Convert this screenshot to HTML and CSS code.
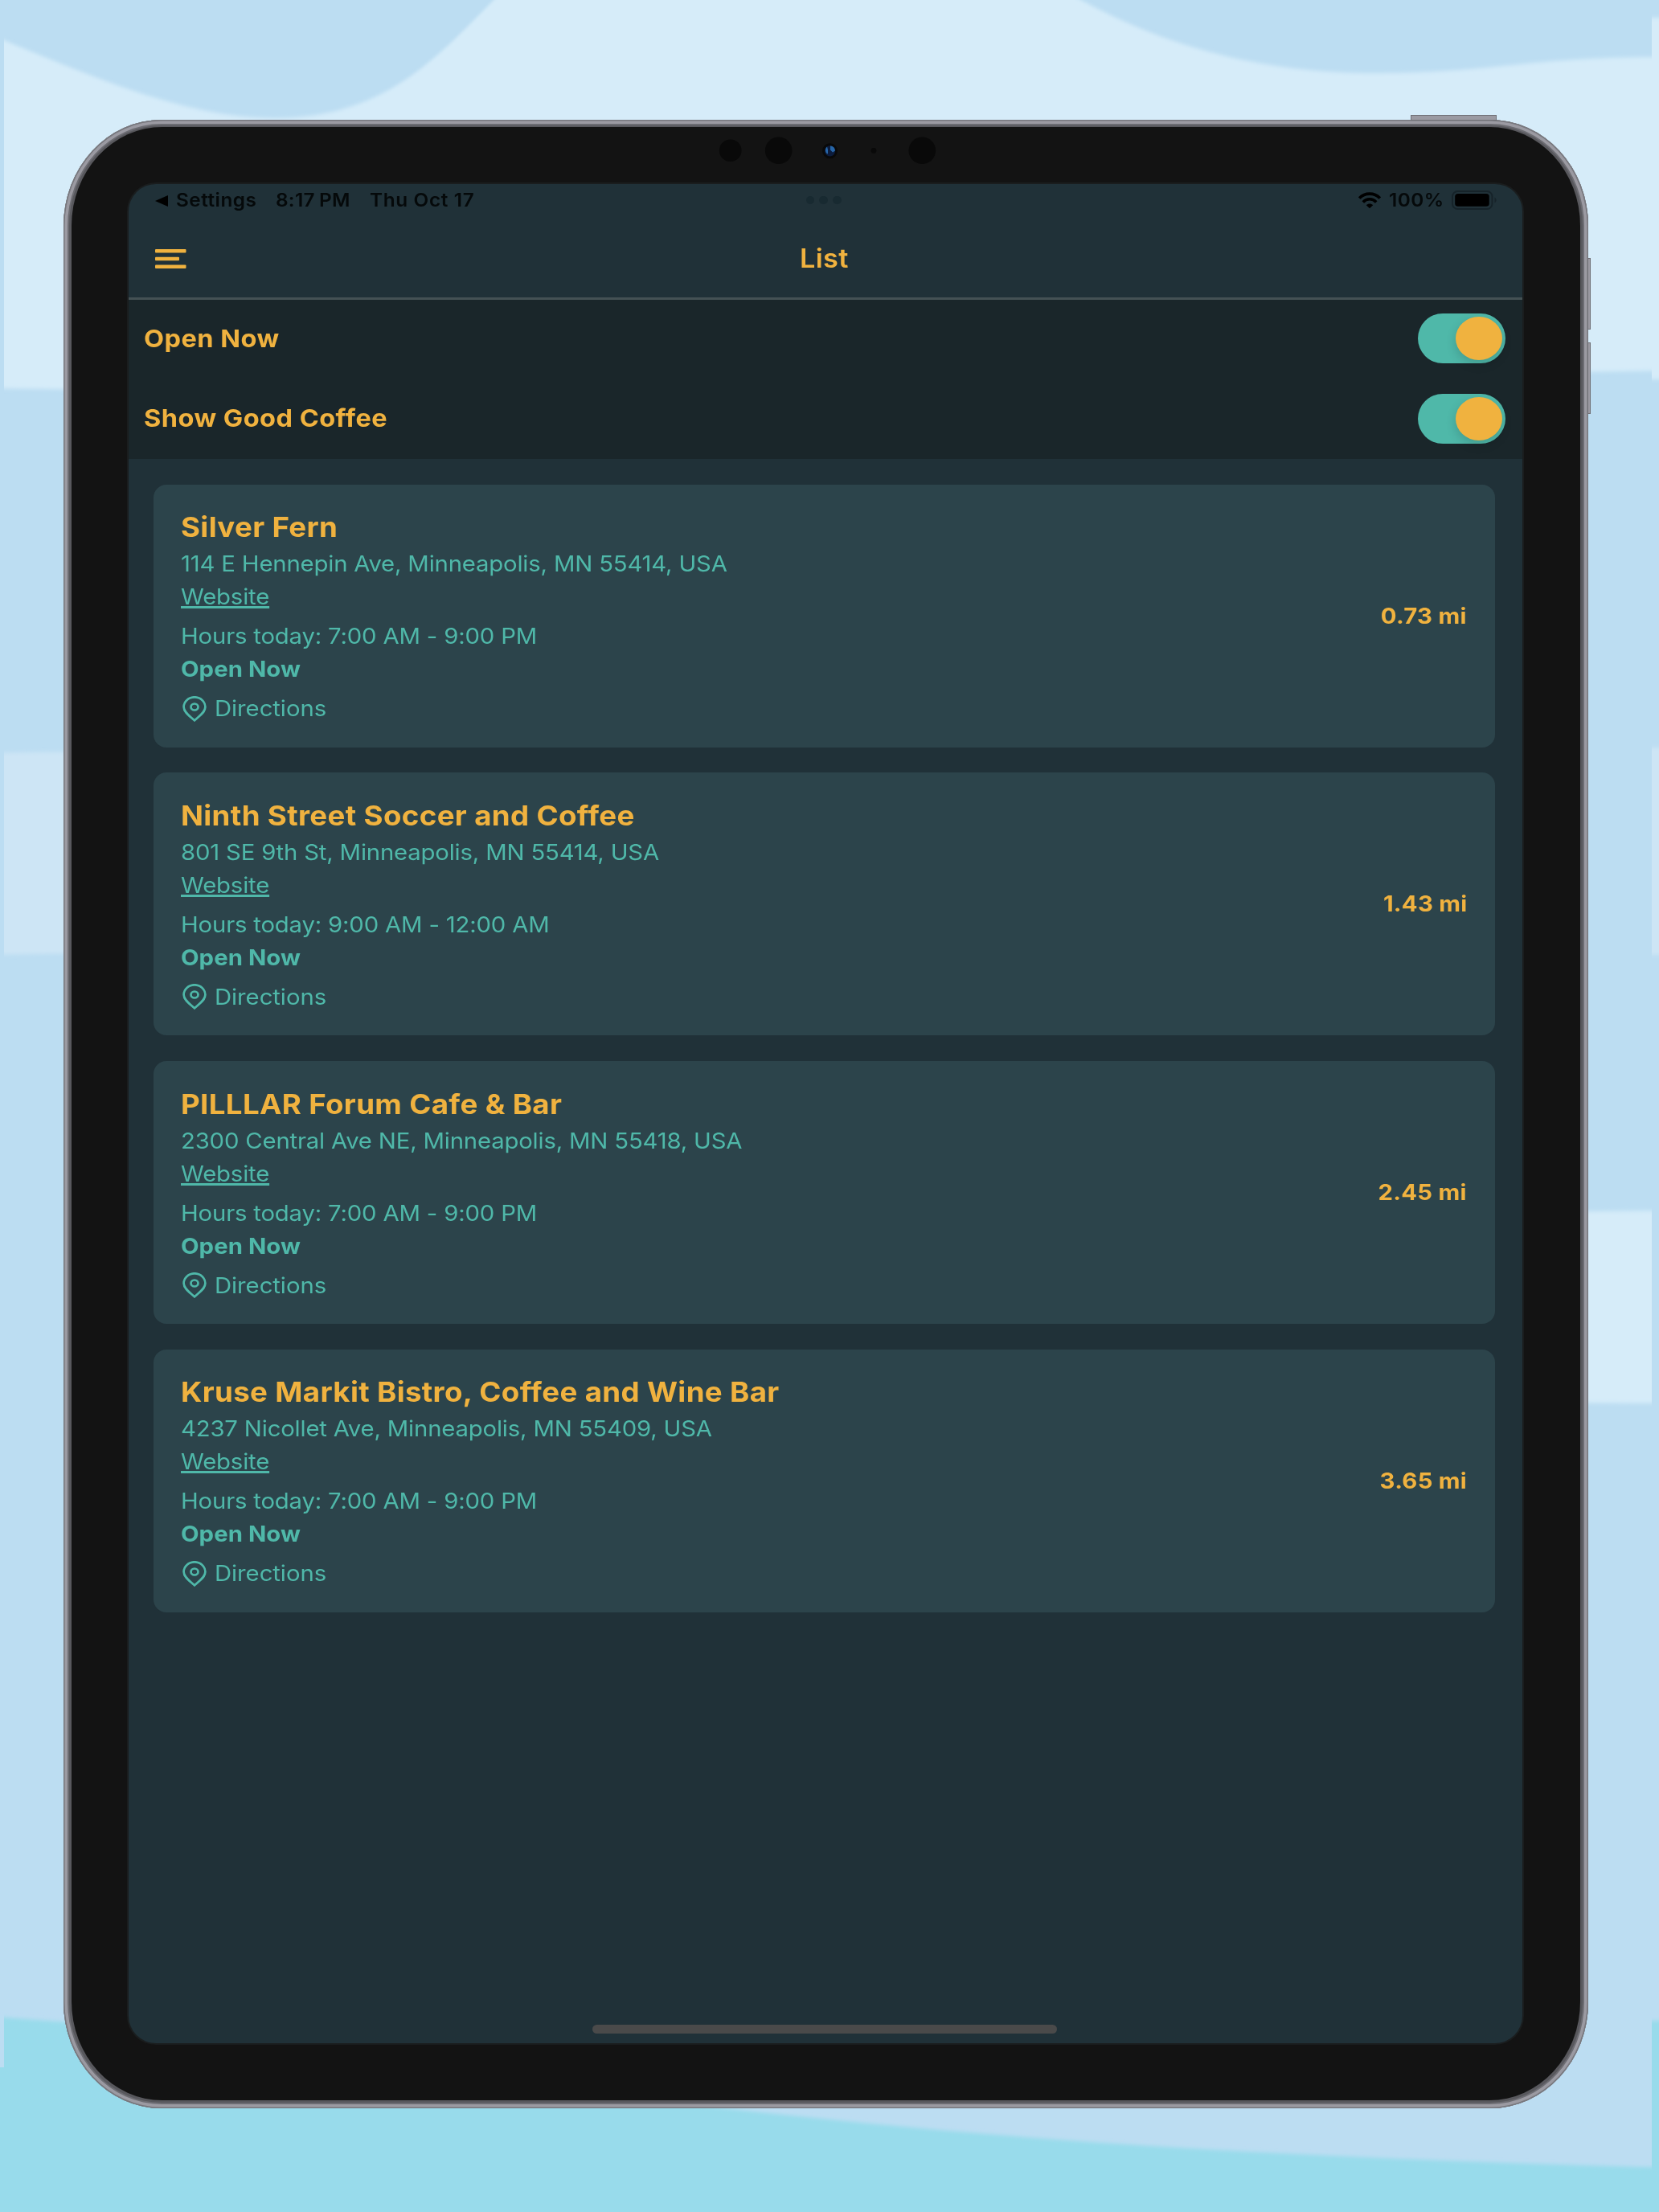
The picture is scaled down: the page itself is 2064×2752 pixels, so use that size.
FILE: index.html
```html
<!DOCTYPE html>
<html lang="en">
<head>
<meta charset="utf-8">
<title>List</title>
<link rel="stylesheet" href="styles.css">
</head>
<body>
<svg class="backdrop" viewBox="0 0 2064 2752" aria-hidden="true">
  <defs><filter id="soft" x="-5%" y="-5%" width="110%" height="110%"><feGaussianBlur stdDeviation="0 2.5"/></filter>
  <clipPath id="tile"><rect x="5" y="0" width="2050" height="2752"/></clipPath>
  <clipPath id="tile-next"><rect x="2055" y="0" width="9" height="2752"/></clipPath></defs>
  <rect width="2064" height="2752" fill="#bcddf2"/>
  <rect y="2572" width="5" height="180" fill="#98dbeb"/>
  <g clip-path="url(#tile)"><g filter="url(#soft)">
    <path fill="#d6ecf9" d="M-20 36 L5 50 C132 103 240 147 342 147 C480 147 545 70 619 -5 L1336 -5 C1420 42 1540 91 1711 91 C1860 91 1900 70 2080 71 L2080 461 L1500 470 L500 490 L-20 483Z"/>
    <path fill="#cde5f5" d="M-20 937 L100 935 V1186 L-20 1188Z"/>
    <path fill="#d6ecf9" d="M1900 1508 L2080 1506 V1746 L1900 1745Z"/>
    <path fill="#98dbeb" d="M-20 2508 L85 2516 C350 2550 600 2600 886 2621 C1180 2655 1500 2682 2080 2697 V2800 H-20Z"/>
  </g></g>
  <g clip-path="url(#tile-next)"><g filter="url(#soft)">
    <rect x="2050" y="22" width="30" height="450" fill="#d6ecf9"/>
    <rect x="2050" y="930" width="30" height="258" fill="#cde5f5"/>
    <rect x="2050" y="2514" width="30" height="260" fill="#98dbeb"/>
  </g></g>
</svg>

<div class="tablet">
  <i class="key key-power"></i><i class="key key-up"></i><i class="key key-down"></i>
  <div class="bezel">
    <svg class="sensors" viewBox="880 158 300 60" aria-hidden="true">
      <g fill="#090909"><circle cx="908.7" cy="187.3" r="13.8"/><circle cx="968.7" cy="187.3" r="16.8"/><circle cx="1032.5" cy="187.8" r="9.5"/><circle cx="1087" cy="187.3" r="3.4"/><circle cx="1147.3" cy="187.3" r="16.8"/></g>
      <circle cx="1032.6" cy="187.8" r="6.6" fill="#0c1c3c"/>
      <path d="M1033 181.4a6.6 6.6 0 0 1 6 6l-3 2-3-3zM1029 182.5l1 4 0 5-2-1a6.600 6.600 0 0 1 1-8z" fill="#2766a8"/>
    </svg>
    <main class="screen">
      <div class="status">
        <span class="back"></span>
        <span class="txt st-settings">Settings</span>
        <span class="txt st-time">8:17<span class="thin"></span>PM</span>
        <span class="txt st-date">Thu Oct 17</span>
        <span class="dots"><i></i><i></i><i></i></span>
        <svg class="wifi" viewBox="0 0 28 20" aria-hidden="true"><g fill="none" stroke="#000" stroke-width="3.6"><path d="M1.200 7.600C8 .3 20 .3 26.800 7.600"/><path d="M5.800 12.400C10.500 7.600 17.500 7.600 22.200 12.400"/></g><path d="M9.800 16.200C12 13.800 16 13.800 18.200 16.200L14 20.200Z"/></svg>
        <span class="txt st-pct">100%</span>
        <svg class="battery" viewBox="0 0 57 24" aria-hidden="true"><rect x="1" y="1" width="49.500" height="22" rx="6.500" fill="none" stroke="#162329" stroke-width="2"/><rect x="4.200" y="4" width="42.500" height="15.800" rx="3.600"/><path d="M53.500 8.500c2.800 1.500 2.800 5.500 0 7z" fill="#162329"/></svg>
      </div>
      <header class="nav">
        <svg class="menu" viewBox="0 0 39 25" aria-hidden="true"><g fill="#f0b23f"><rect x="0" y="0" width="38.500" height="4.600" rx="1"/><rect x="0" y="9.700" width="30" height="4.600" rx="1"/><rect x="0" y="19.500" width="38.500" height="4.600" rx="1"/></g></svg>
        <h1 class="txt nav-title">List</h1>
      </header>
      <section class="filters">
        <div class="filter"><span class="txt label">Open Now</span><span class="switch"><i></i></span></div>
        <div class="filter"><span class="txt label">Show Good Coffee</span><span class="switch"><i></i></span></div>
      </section>
      <section class="cards">
        <article class="card"><div class="info">
          <h2 class="txt">Silver Fern</h2>
          <p class="txt">114 E Hennepin Ave, Minneapolis, MN 55414, USA</p>
          <a class="txt site">Website</a>
          <p class="txt hours">Hours today: 7:00 AM - 9:00 PM</p>
          <p class="txt open">Open Now</p>
          <div class="dir"><svg viewBox="0 0 30 32"><g fill="none" stroke="#4fb8a9" stroke-width="2.700"><path d="M15 30.300C10 25.500 1.600 20.500 1.600 13.600A13.400 12.300 0 0 1 28.400 13.600C28.400 20.500 20 25.500 15 30.300Z"/><ellipse cx="15" cy="13.500" rx="4.500" ry="4"/></g></svg><span class="txt">Directions</span></div>
        </div><span class="txt dist">0.73 mi</span></article>
        <article class="card"><div class="info">
          <h2 class="txt">Ninth Street Soccer and Coffee</h2>
          <p class="txt">801 SE 9th St, Minneapolis, MN 55414, USA</p>
          <a class="txt site">Website</a>
          <p class="txt hours">Hours today: 9:00 AM - 12:00 AM</p>
          <p class="txt open">Open Now</p>
          <div class="dir"><svg viewBox="0 0 30 32"><g fill="none" stroke="#4fb8a9" stroke-width="2.700"><path d="M15 30.300C10 25.500 1.600 20.500 1.600 13.600A13.400 12.300 0 0 1 28.400 13.600C28.400 20.500 20 25.500 15 30.300Z"/><ellipse cx="15" cy="13.500" rx="4.500" ry="4"/></g></svg><span class="txt">Directions</span></div>
        </div><span class="txt dist">1.43 mi</span></article>
        <article class="card"><div class="info">
          <h2 class="txt">PILLLAR Forum Cafe &amp; Bar</h2>
          <p class="txt">2300 Central Ave NE, Minneapolis, MN 55418, USA</p>
          <a class="txt site">Website</a>
          <p class="txt hours">Hours today: 7:00 AM - 9:00 PM</p>
          <p class="txt open">Open Now</p>
          <div class="dir"><svg viewBox="0 0 30 32"><g fill="none" stroke="#4fb8a9" stroke-width="2.700"><path d="M15 30.300C10 25.500 1.600 20.500 1.600 13.600A13.400 12.300 0 0 1 28.400 13.600C28.400 20.500 20 25.500 15 30.300Z"/><ellipse cx="15" cy="13.500" rx="4.500" ry="4"/></g></svg><span class="txt">Directions</span></div>
        </div><span class="txt dist">2.45 mi</span></article>
        <article class="card"><div class="info">
          <h2 class="txt">Kruse Markit Bistro, Coffee and Wine Bar</h2>
          <p class="txt">4237 Nicollet Ave, Minneapolis, MN 55409, USA</p>
          <a class="txt site">Website</a>
          <p class="txt hours">Hours today: 7:00 AM - 9:00 PM</p>
          <p class="txt open">Open Now</p>
          <div class="dir"><svg viewBox="0 0 30 32"><g fill="none" stroke="#4fb8a9" stroke-width="2.700"><path d="M15 30.300C10 25.500 1.600 20.500 1.600 13.600A13.400 12.300 0 0 1 28.400 13.600C28.400 20.500 20 25.500 15 30.300Z"/><ellipse cx="15" cy="13.500" rx="4.500" ry="4"/></g></svg><span class="txt">Directions</span></div>
        </div><span class="txt dist">3.65 mi</span></article>
      </section>
      <div class="home"></div>
    </main>
  </div>
</div>
</body>
</html>
```
FILE: styles.css
```css
* { box-sizing: border-box; margin: 0; padding: 0; }
html, body { width: 2064px; height: 2752px; overflow: hidden; }
body {
  background: #bcddf2;
  font-family: Inter, "Liberation Sans", sans-serif;
  padding: 149px 0 0 79px;
}
.backdrop { position: absolute; left: 0; top: 0; width: 2064px; height: 2752px; z-index: -1; }

.tablet {
  position: relative;
  width: 1896.500px; height: 2473.500px;
  padding: 9px 9.500px 9.500px 10px;
  border-radius: 122px / 132px;
  background: #58585d;
  box-shadow: inset 0 0 0 1.500px #77777d, inset 0 0 0 5px #9b9aa2, inset 0 0 0 7px #6c6c72;
}
.key { position: absolute; background: #9b9aa2; border: 1.500px solid #707076; }
.key-power { left: 1676px; top: -6px; width: 107px; height: 7px; }
.key-up, .key-down { left: 1896px; width: 4px; height: 89px; }
.key-up { top: 172px; }
.key-down { top: 277px; }
.bezel {
  position: relative;
  height: 100%;
  padding: 71px 72.500px 71px 71px;
  border-radius: 113px / 123px;
  background: #131313;
}
.sensors { position: absolute; left: 791px; top: 0; width: 300px; height: 60px; }

.screen {
  display: flex; flex-direction: column;
  position: relative;
  width: 1733.500px; height: 2313px;
  border-radius: 34px;
  background: #203138;
  box-shadow: 0 0 0 2px #1a1d1e;
  overflow: hidden;
}
.txt { display: block; white-space: nowrap; transform: scaleX(1.073); transform-origin: left center; font-variant-ligatures: none; }

.status { display: flex; align-items: center; height: 41px; position: relative; padding-left: 33px; color: #05090a; font-size: 22.700px; font-weight: 600; line-height: 40px; letter-spacing: .25px; }
.back { width: 0; height: 0; border: 7.500px solid transparent; border-left: 0; border-right: 16px solid #000; }
.status > .txt { height: 41px; }
.st-settings { margin-left: 10px; width: 124px; letter-spacing: .45px; }
.st-time { display: flex; width: 117px; }
.thin { width: 5px; }
.st-date { width: 140px; letter-spacing: .6px; }
.dots { display: flex; gap: 6.400px; margin-left: 402.500px; }
.dots i { width: 10.600px; height: 10.600px; border-radius: 50%; background: #182a31; }
.wifi { width: 28px; height: 20px; margin-left: auto; }
.st-pct { width: 68px; margin-left: 10px; letter-spacing: .4px; }
.battery { width: 57px; height: 24px; margin: 0 31px 0 10px; }
.dots, .wifi, .battery { margin-top: -1px; }

.nav { display: grid; grid-template-columns: 38.500px 1fr 38.500px; align-items: center; height: 103px; padding: 3px 33px 0; border-bottom: 3px solid #445154; }
.menu { width: 39px; height: 25px; margin-top: 2px; }
.nav-title { justify-self: center; margin-right: 2px; transform-origin: center; color: #f0b23f; font-size: 32px; font-weight: 600; line-height: 40px; letter-spacing: .3px; }

.filters { height: 198px; background: #1a262a; display: flex; flex-direction: column; }
.filter { display: flex; justify-content: space-between; align-items: center; height: 100px; padding: 0 21px 3px 19px; }
.filter + .filter { padding-bottom: 2px; }
.label { margin-top: -1px; color: #f0b23f; font-size: 30.300px; font-weight: 700; letter-spacing: .45px; }
.switch { display: flex; justify-content: flex-end; align-items: center; width: 109px; height: 62px; padding-right: 4px; border-radius: 31px; background: #4fb8a9; }
.switch i { width: 58px; height: 54px; border-radius: 50%; background: #f0b23f; box-shadow: 0 5px 13px rgba(0, 0, 0, .16); }

.cards { display: flex; flex-direction: column; gap: 31.700px; padding: 31.700px 33.500px 0 31px; }
.card { display: flex; justify-content: space-between; align-items: center; height: 327px; padding: 0 35px 0 34px; border-radius: 16px; background: #2c444b; color: #4fb8a9; font-size: 27.300px; line-height: 41px; letter-spacing: -.16px; }
.info { padding-top: 3px; }
h2.txt { color: #f0b23f; font-size: 34.200px; font-weight: 700; line-height: 48px; letter-spacing: .32px; margin-top: -1px; margin-bottom: 1px; }
.site { text-decoration: underline; text-decoration-thickness: 2.500px; text-underline-offset: 2px; text-decoration-skip-ink: none; width: max-content; }
.hours { margin-top: 8px; }
.open { font-weight: 700; letter-spacing: .05px; }
.dir { display: flex; align-items: center; margin-top: 8px; }
.dir svg { width: 30px; height: 32px; margin: 0 10px 0 2px; }
.dir .txt { letter-spacing: -.05px; }
.card .dist { transform-origin: right center; color: #f0b23f; font-weight: 700; letter-spacing: .25px; }

.home { position: absolute; left: 576.500px; bottom: 12.500px; width: 578.500px; height: 11px; border-radius: 5.500px; background: #4a4a4a; }
```
